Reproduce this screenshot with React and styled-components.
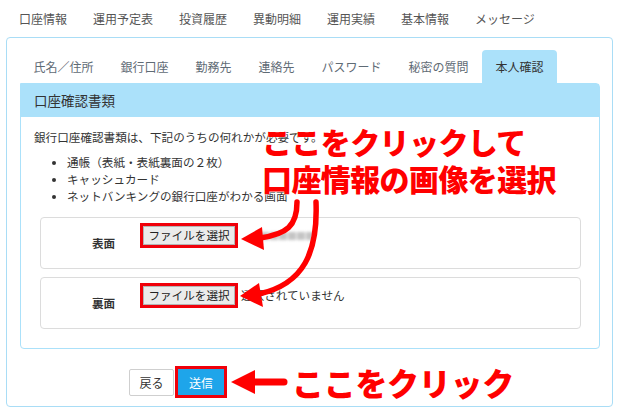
import React from "react";
import styled, { createGlobalStyle } from "styled-components";

const GlobalStyle = createGlobalStyle`
  body {
    margin: 0;
    background: #fff;
    font-family: "Noto Sans CJK JP", "Noto Sans", sans-serif;
    color: #333;
  }
`;

const navItems = ["口座情報", "運用予定表", "投資履歴", "異動明細", "運用実績", "基本情報", "メッセージ"];
const tabs = ["氏名／住所", "銀行口座", "勤務先", "連絡先", "パスワード", "秘密の質問", "本人確認"];
const docs = ["通帳（表紙・表紙裏面の２枚）", "キャッシュカード", "ネットバンキングの銀行口座がわかる画面"];

const App = () => {
  return (
    <Page>
      <GlobalStyle />
      <Nav>
        {navItems.map(item => (
          <NavItem key={item}>{item}</NavItem>
        ))}
      </Nav>
      <Panel>
        <Tabs>
          {tabs.map(tab => (
            <Tab key={tab} active={tab === "本人確認"}>
              {tab}
            </Tab>
          ))}
        </Tabs>
        <Card>
          <CardHeader>口座確認書類</CardHeader>
          <CardBody>
            <Intro>銀行口座確認書類は、下記のうちの何れかが必要です。</Intro>
            <DocList>
              {docs.map(doc => (
                <li key={doc}>{doc}</li>
              ))}
            </DocList>
            <UploadBox>
              <Label>表面</Label>
              <RedFrame>
                <FileButton>ファイルを選択</FileButton>
              </RedFrame>
              <BlurredName>■■■■■■</BlurredName>
            </UploadBox>
            <UploadBox>
              <Label>裏面</Label>
              <RedFrame>
                <FileButton>ファイルを選択</FileButton>
              </RedFrame>
              <FileStatus>選択されていません</FileStatus>
            </UploadBox>
          </CardBody>
        </Card>
        <ButtonRow>
          <BackButton>戻る</BackButton>
          <RedFrame>
            <SubmitButton>送信</SubmitButton>
          </RedFrame>
          <ArrowLeft width="58" height="26" viewBox="0 0 58 26">
            <polygon points="0,13 24,1 24,25" fill="#f00" />
            <line x1="20" y1="13" x2="53" y2="13" stroke="#f00" strokeWidth="7" strokeLinecap="round" />
          </ArrowLeft>
          <CalloutSmall>ここをクリック</CalloutSmall>
        </ButtonRow>
      </Panel>

      <Callout>
        ここをクリックして
        <br />
        口座情報の画像を選択
      </Callout>
      <Arrows width="620" height="418" viewBox="0 0 620 418">
        <path d="M297 202 C 297 226, 287 234, 260 238" stroke="#f00" strokeWidth="5.5" fill="none" strokeLinecap="round" />
        <polygon points="241,239 262,227 264,250" fill="#f00" />
        <path d="M316 202 C 318 252, 304 284, 259 294" stroke="#f00" strokeWidth="5.5" fill="none" strokeLinecap="round" />
        <polygon points="240,296 259,283 263,307" fill="#f00" />
      </Arrows>
    </Page>
  );
};

/**
 *
 * Styled Components
 *
 */
const Page = styled.div`
  position: relative;
  width: 620px;
  height: 418px;
  overflow: hidden;
`;

const Nav = styled.div`
  display: flex;
  align-items: center;
  height: 37px;
  padding-left: 6px;
`;

const NavItem = styled.span`
  padding: 0 13px;
  font-size: 12px;
  line-height: 16px;
  color: #555;
`;

const Panel = styled.div`
  box-sizing: border-box;
  width: 607px;
  height: 370px;
  margin-left: 6px;
  padding: 12px 12px 0 13px;
  border: 1px solid #a9ddf6;
  border-radius: 4px;
`;

const Tabs = styled.div`
  display: flex;
  height: 33px;
`;

const Tab = styled.div`
  padding: 0 13.5px;
  font-size: 12px;
  line-height: 33px;
  color: ${p => (p.active ? "#333" : "#5f6b75")};
  background: ${p => (p.active ? "#abe1fa" : "transparent")};
  border-radius: 4px 4px 0 0;
`;

const Card = styled.div`
  border: 1px solid #abe1fa;
  border-radius: 0 4px 4px 4px;
`;

const CardHeader = styled.div`
  height: 33px;
  padding-left: 13px;
  background: #abe1fa;
  font-size: 13.5px;
  line-height: 33px;
  color: #333;
`;

const CardBody = styled.div`
  padding: 12px 18px 19px 13px;
  font-size: 11.6px;
`;

const Intro = styled.div`
  line-height: 17px;
`;

const DocList = styled.ul`
  margin: 8px 0 12px;
  padding-left: 33px;
  line-height: 17px;
`;

const UploadBox = styled.div`
  box-sizing: border-box;
  display: flex;
  align-items: flex-start;
  height: 52px;
  margin-left: 6px;
  padding-top: 5px;
  border: 1px solid #dcdcdc;
  border-radius: 4px;

  & + & {
    margin-top: 8px;
  }
`;

const Label = styled.span`
  width: 24px;
  margin: 8px 24px 0 51px;
  font-weight: bold;
  line-height: 25px;
`;

const RedFrame = styled.div`
  display: flex;
  border: 3px solid #f0000a;
`;

const FileButton = styled.button`
  width: 92px;
  height: 19px;
  padding: 0;
  border: 1px solid #b5b5b5;
  background: #ebebeb;
  font-family: inherit;
  font-size: 11.6px;
  line-height: 17px;
  color: #222;
`;

const BlurredName = styled.span`
  margin-left: 22px;
  font-size: 10px;
  line-height: 25px;
  letter-spacing: -1px;
  color: #c4c4c4;
  filter: blur(1.5px);
`;

const FileStatus = styled.span`
  margin-left: 3px;
  line-height: 25px;
  color: #333;
`;

const ButtonRow = styled.div`
  display: flex;
  align-items: center;
  margin: 16px 0 0 109px;
`;

const BackButton = styled.button`
  width: 45px;
  height: 27px;
  margin-right: 1px;
  padding: 0;
  border: 1px solid #cfcfcf;
  border-radius: 2px;
  background: #fff;
  font-family: inherit;
  font-size: 12px;
  color: #333;
`;

const SubmitButton = styled.button`
  width: 46px;
  height: 26px;
  padding: 0;
  border: 0;
  background: #1ea5ea;
  font-family: inherit;
  font-size: 12px;
  color: #fff;
`;

const ArrowLeft = styled.svg`
  margin-left: 4px;
  display: block;
`;

const CalloutSmall = styled.span`
  margin-left: 3px;
  font-size: 32px;
  font-weight: 900;
  line-height: 34px;
  color: #f00;
  letter-spacing: -0.3px;
`;

const Callout = styled.div`
  position: absolute;
  left: 262px;
  top: 123px;
  font-size: 30px;
  font-weight: 900;
  line-height: 37px;
  letter-spacing: -0.6px;
  color: #f00;
  text-shadow: 0 0 2px #fff, 0 0 2px #fff;
  white-space: nowrap;
`;

const Arrows = styled.svg`
  position: absolute;
  left: 0;
  top: 0;
  pointer-events: none;
`;

export default App;
